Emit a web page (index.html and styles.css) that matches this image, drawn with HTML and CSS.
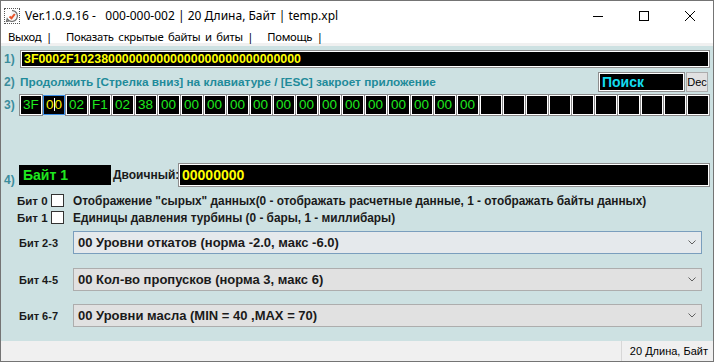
FILE: index.html
```html
<!DOCTYPE html>
<html lang="ru">
<head>
  <meta charset="UTF-8">
  <meta name="viewport" content="width=device-width, initial-scale=1.0">
  <title>Ver.1.0.9.16</title>
  <link rel="stylesheet" href="styles.css">
</head>
<body>
  <div class="window">
    <!-- Заголовок окна -->
    <div class="titlebar">
      <span class="app-icon">
        <svg width="14" height="14" viewBox="0 0 14 14">
          <path d="M7 1.5 A5.5 5.5 0 1 1 2.2 9.8 L1.5 12.5 L4.2 11.8" fill="#f4f4f4" stroke="#6a6a6a" stroke-width="1.2"/>
          <path d="M4.5 7.5 L6.5 9.2 L9.8 5" fill="none" stroke="#e8542a" stroke-width="2"/>
        </svg>
      </span>
      <span class="title">Ver.1.0.9.16 -&nbsp;&nbsp; 000-000-002 | 20 Длина, Байт | temp.xpl</span>
      <div class="controls">
        <span class="ctl">
          <svg width="10" height="10" viewBox="0 0 10 10"><path d="M0 5.5 H10" stroke="#000" stroke-width="1"/></svg>
        </span>
        <span class="ctl">
          <svg width="10" height="10" viewBox="0 0 10 10"><rect x="0.5" y="0.5" width="9" height="9" fill="none" stroke="#000" stroke-width="1"/></svg>
        </span>
        <span class="ctl">
          <svg width="10" height="10" viewBox="0 0 10 10"><path d="M0 0 L10 10 M10 0 L0 10" stroke="#000" stroke-width="1"/></svg>
        </span>
      </div>
    </div>

    <!-- Меню -->
    <div class="menubar">
      <span class="menu-item">Выход |</span>
      <span class="menu-item">Показать скрытые байты и биты |</span>
      <span class="menu-item">Помощь |</span>
    </div>

    <div class="content">
      <div class="row row-hex">
        <span class="num">1)</span>
        <div class="field hex-field">3F0002F102380000000000000000000000000000</div>
      </div>

      <div class="row row-hint">
        <span class="num">2)</span>
        <span class="hint">Продолжить [Стрелка вниз] на клавиатуре / [ESC] закроет приложение</span>
        <div class="field search">Поиск</div>
        <button class="btn-dec">Dec</button>
      </div>

      <div class="row row-cells">
        <span class="num">3)</span>
        <div class="cells">
          <span class="cell">3F</span>
          <span class="cell active">0<i class="caret"></i>0</span>
          <span class="cell">02</span>
          <span class="cell">F1</span>
          <span class="cell">02</span>
          <span class="cell">38</span>
          <span class="cell">00</span>
          <span class="cell">00</span>
          <span class="cell">00</span>
          <span class="cell">00</span>
          <span class="cell">00</span>
          <span class="cell">00</span>
          <span class="cell">00</span>
          <span class="cell">00</span>
          <span class="cell">00</span>
          <span class="cell">00</span>
          <span class="cell">00</span>
          <span class="cell">00</span>
          <span class="cell">00</span>
          <span class="cell">00</span>
          <span class="cell"></span>
          <span class="cell"></span>
          <span class="cell"></span>
          <span class="cell"></span>
          <span class="cell"></span>
          <span class="cell"></span>
          <span class="cell"></span>
          <span class="cell"></span>
          <span class="cell"></span>
          <span class="cell"></span>
        </div>
      </div>

      <div class="row row-byte">
        <span class="num num-low">4)</span>
        <div class="byte-name">Байт 1</div>
        <span class="bin-label">Двоичный:</span>
        <div class="field bin-field">00000000</div>
      </div>

      <div class="bits">
        <div class="bit">
          <span class="bit-name">Бит 0</span>
          <span class="checkbox"></span>
          <span class="bit-text">Отображение "сырых" данных(0 - отображать расчетные данные, 1 - отображать байты данных)</span>
        </div>
        <div class="bit">
          <span class="bit-name">Бит 1</span>
          <span class="checkbox"></span>
          <span class="bit-text">Единицы давления турбины (0 - бары, 1 - миллибары)</span>
        </div>
      </div>

      <div class="combo-row">
        <span class="combo-label">Бит 2-3</span>
        <div class="combo focused">
          <span>00 Уровни откатов (норма -2.0, макс -6.0)</span>
          <svg class="chevron" width="8" height="5" viewBox="0 0 8 5"><path d="M0.5 0.5 L4 4 L7.5 0.5" fill="none" stroke="#606060" stroke-width="1"/></svg>
        </div>
      </div>
      <div class="combo-row">
        <span class="combo-label">Бит 4-5</span>
        <div class="combo">
          <span>00 Кол-во пропусков (норма 3, макс 6)</span>
          <svg class="chevron" width="8" height="5" viewBox="0 0 8 5"><path d="M0.5 0.5 L4 4 L7.5 0.5" fill="none" stroke="#606060" stroke-width="1"/></svg>
        </div>
      </div>
      <div class="combo-row">
        <span class="combo-label">Бит 6-7</span>
        <div class="combo">
          <span>00 Уровни масла (MIN = 40 ,MAX = 70)</span>
          <svg class="chevron" width="8" height="5" viewBox="0 0 8 5"><path d="M0.5 0.5 L4 4 L7.5 0.5" fill="none" stroke="#606060" stroke-width="1"/></svg>
        </div>
      </div>
    </div>

    <div class="statusbar">
      <span class="status-cell">20 Длина, Байт</span>
    </div>
  </div>
</body>
</html>
```

FILE: styles.css
```css
* {
  box-sizing: border-box;
  margin: 0;
  padding: 0;
}

body {
  font-family: "Liberation Sans", Arial, sans-serif;
  background-color: #ffffff;
}

.window {
  width: 714px;
  height: 362px;
  border: 1px solid #747474;
  display: flex;
  flex-direction: column;
  background-color: #cde1e2;
}

/* Заголовок */
.titlebar {
  height: 29px;
  background-color: #ffffff;
  display: flex;
  align-items: center;
  font-family: "Noto Sans", sans-serif;
  font-size: 12px;
  color: #000;
}

.app-icon {
  width: 16px;
  height: 16px;
  margin-left: 3px;
  margin-right: 5px;
  border: 1px dotted #555;
  display: flex;
  align-items: center;
  justify-content: center;
}

.title {
  flex: 1;
  white-space: pre;
}

.controls {
  display: flex;
  height: 100%;
}

.ctl {
  width: 46px;
  display: flex;
  align-items: center;
  justify-content: center;
}

/* Меню */
.menubar {
  height: 16px;
  background-color: #ffffff;
  border-bottom: 3px solid #f0f0f0;
  display: flex;
  align-items: center;
  font-family: "Noto Sans", sans-serif;
  font-size: 11.3px;
  letter-spacing: -0.3px;
  padding-left: 1px;
}

.menu-item {
  padding: 0 7px 0 6px;
  line-height: 13px;
  word-spacing: 2px;
}

.menu-item + .menu-item {
  margin-left: 1px;
}

/* Рабочая область */
.content {
  flex: 1;
  padding: 4px 3px 0 3px;
}

.row {
  display: flex;
  align-items: center;
}

.num {
  width: 16px;
  font-size: 12px;
  color: #3b8d9c;
  font-weight: bold;
}

.field {
  background-color: #000;
  border: 1px solid #8d8d8d;
  box-shadow: inset 0 0 0 1px #ffffff;
}

.row-hex {
  height: 18px;
}

.hex-field {
  flex: 1;
  height: 18px;
  padding-left: 3px;
  color: #ffff00;
  font-weight: bold;
  font-size: 12.4px;
  line-height: 16px;
}

.row-hint {
  margin-top: 4px;
  height: 20px;
}

.hint {
  flex: 1;
  font-weight: bold;
  font-size: 11.8px;
  color: #1f8b9a;
}

.search {
  width: 87px;
  height: 20px;
  color: #14dcf0;
  font-weight: bold;
  font-size: 14px;
  line-height: 18px;
  padding-left: 3px;
}

.btn-dec {
  width: 22px;
  height: 20px;
  margin-left: 1px;
  margin-right: 2px;
  background-color: #e1e1e1;
  border: 1px solid #adadad;
  font-family: "Liberation Sans", Arial, sans-serif;
  font-size: 11px;
  color: #000;
}

.row-cells {
  margin-top: 3px;
  height: 20px;
}

.cells {
  display: flex;
  gap: 1px;
}

.cell {
  width: 22px;
  height: 20px;
  background-color: #000;
  border: 1px solid #ffffff;
  box-shadow: 0 0 0 1px #8a8a8a;
  color: #1fe81f;
  font-size: 13.5px;
  line-height: 18px;
  padding-left: 2px;
}

.cell.active {
  border-color: #3c8ee6;
  box-shadow: none;
  color: #f6f000;
}

.caret {
  display: inline-block;
  width: 1px;
  height: 13px;
  background-color: #ffffff;
  vertical-align: -2px;
}

.row-byte {
  margin-top: 48px;
  height: 24px;
}

.num-low {
  align-self: flex-end;
  width: 15px;
}

.byte-name {
  width: 92px;
  height: 20px;
  background-color: #000;
  color: #1fe81f;
  font-weight: bold;
  font-size: 14px;
  line-height: 20px;
  padding-left: 4px;
}

.bin-label {
  width: 67px;
  padding-left: 2px;
  font-weight: bold;
  font-size: 12px;
  color: #1a1a1a;
}

.bin-field {
  flex: 1;
  height: 24px;
  color: #ffff00;
  font-weight: bold;
  font-size: 14px;
  line-height: 22px;
  padding-left: 3px;
}

/* Биты */
.bits {
  margin-top: 5px;
  padding-left: 13px;
}

.bit {
  display: flex;
  align-items: center;
  height: 17px;
  font-weight: bold;
  font-size: 12px;
  color: #1a1a1a;
}

.bit-name {
  width: 34px;
  font-size: 11.5px;
}

.bit-text {
  font-size: 11.85px;
}

.checkbox {
  width: 13px;
  height: 13px;
  background-color: #ffffff;
  border: 1px solid #333;
  margin-right: 9px;
}

/* Выпадающие списки */
.combo-row {
  display: flex;
  align-items: center;
  margin-top: 5px;
  padding-right: 8px;
}

.combo-row + .combo-row {
  margin-top: 14px;
}

.combo-row:last-child {
  margin-top: 13px;
}

.combo-label {
  width: 69px;
  padding-left: 15px;
  font-weight: bold;
  font-size: 11px;
  color: #1a1a1a;
}

.combo {
  flex: 1;
  height: 23px;
  display: flex;
  align-items: center;
  justify-content: space-between;
  background-color: #e1e1e1;
  border: 1px solid #adadad;
  padding: 0 5px 0 4px;
  font-weight: bold;
  font-size: 13px;
  color: #1a1a1a;
}

.combo.focused {
  background-color: #e5e9ec;
  border-color: #7a9ebd;
}

/* Строка состояния */
.statusbar {
  height: 20px;
  background-color: #f0f0f0;
  display: flex;
  justify-content: flex-end;
  align-items: center;
  font-size: 11px;
}

.status-cell {
  border-left: 1px solid #d7d7d7;
  height: 100%;
  line-height: 20px;
  padding: 0 5px 0 8px;
}
```
